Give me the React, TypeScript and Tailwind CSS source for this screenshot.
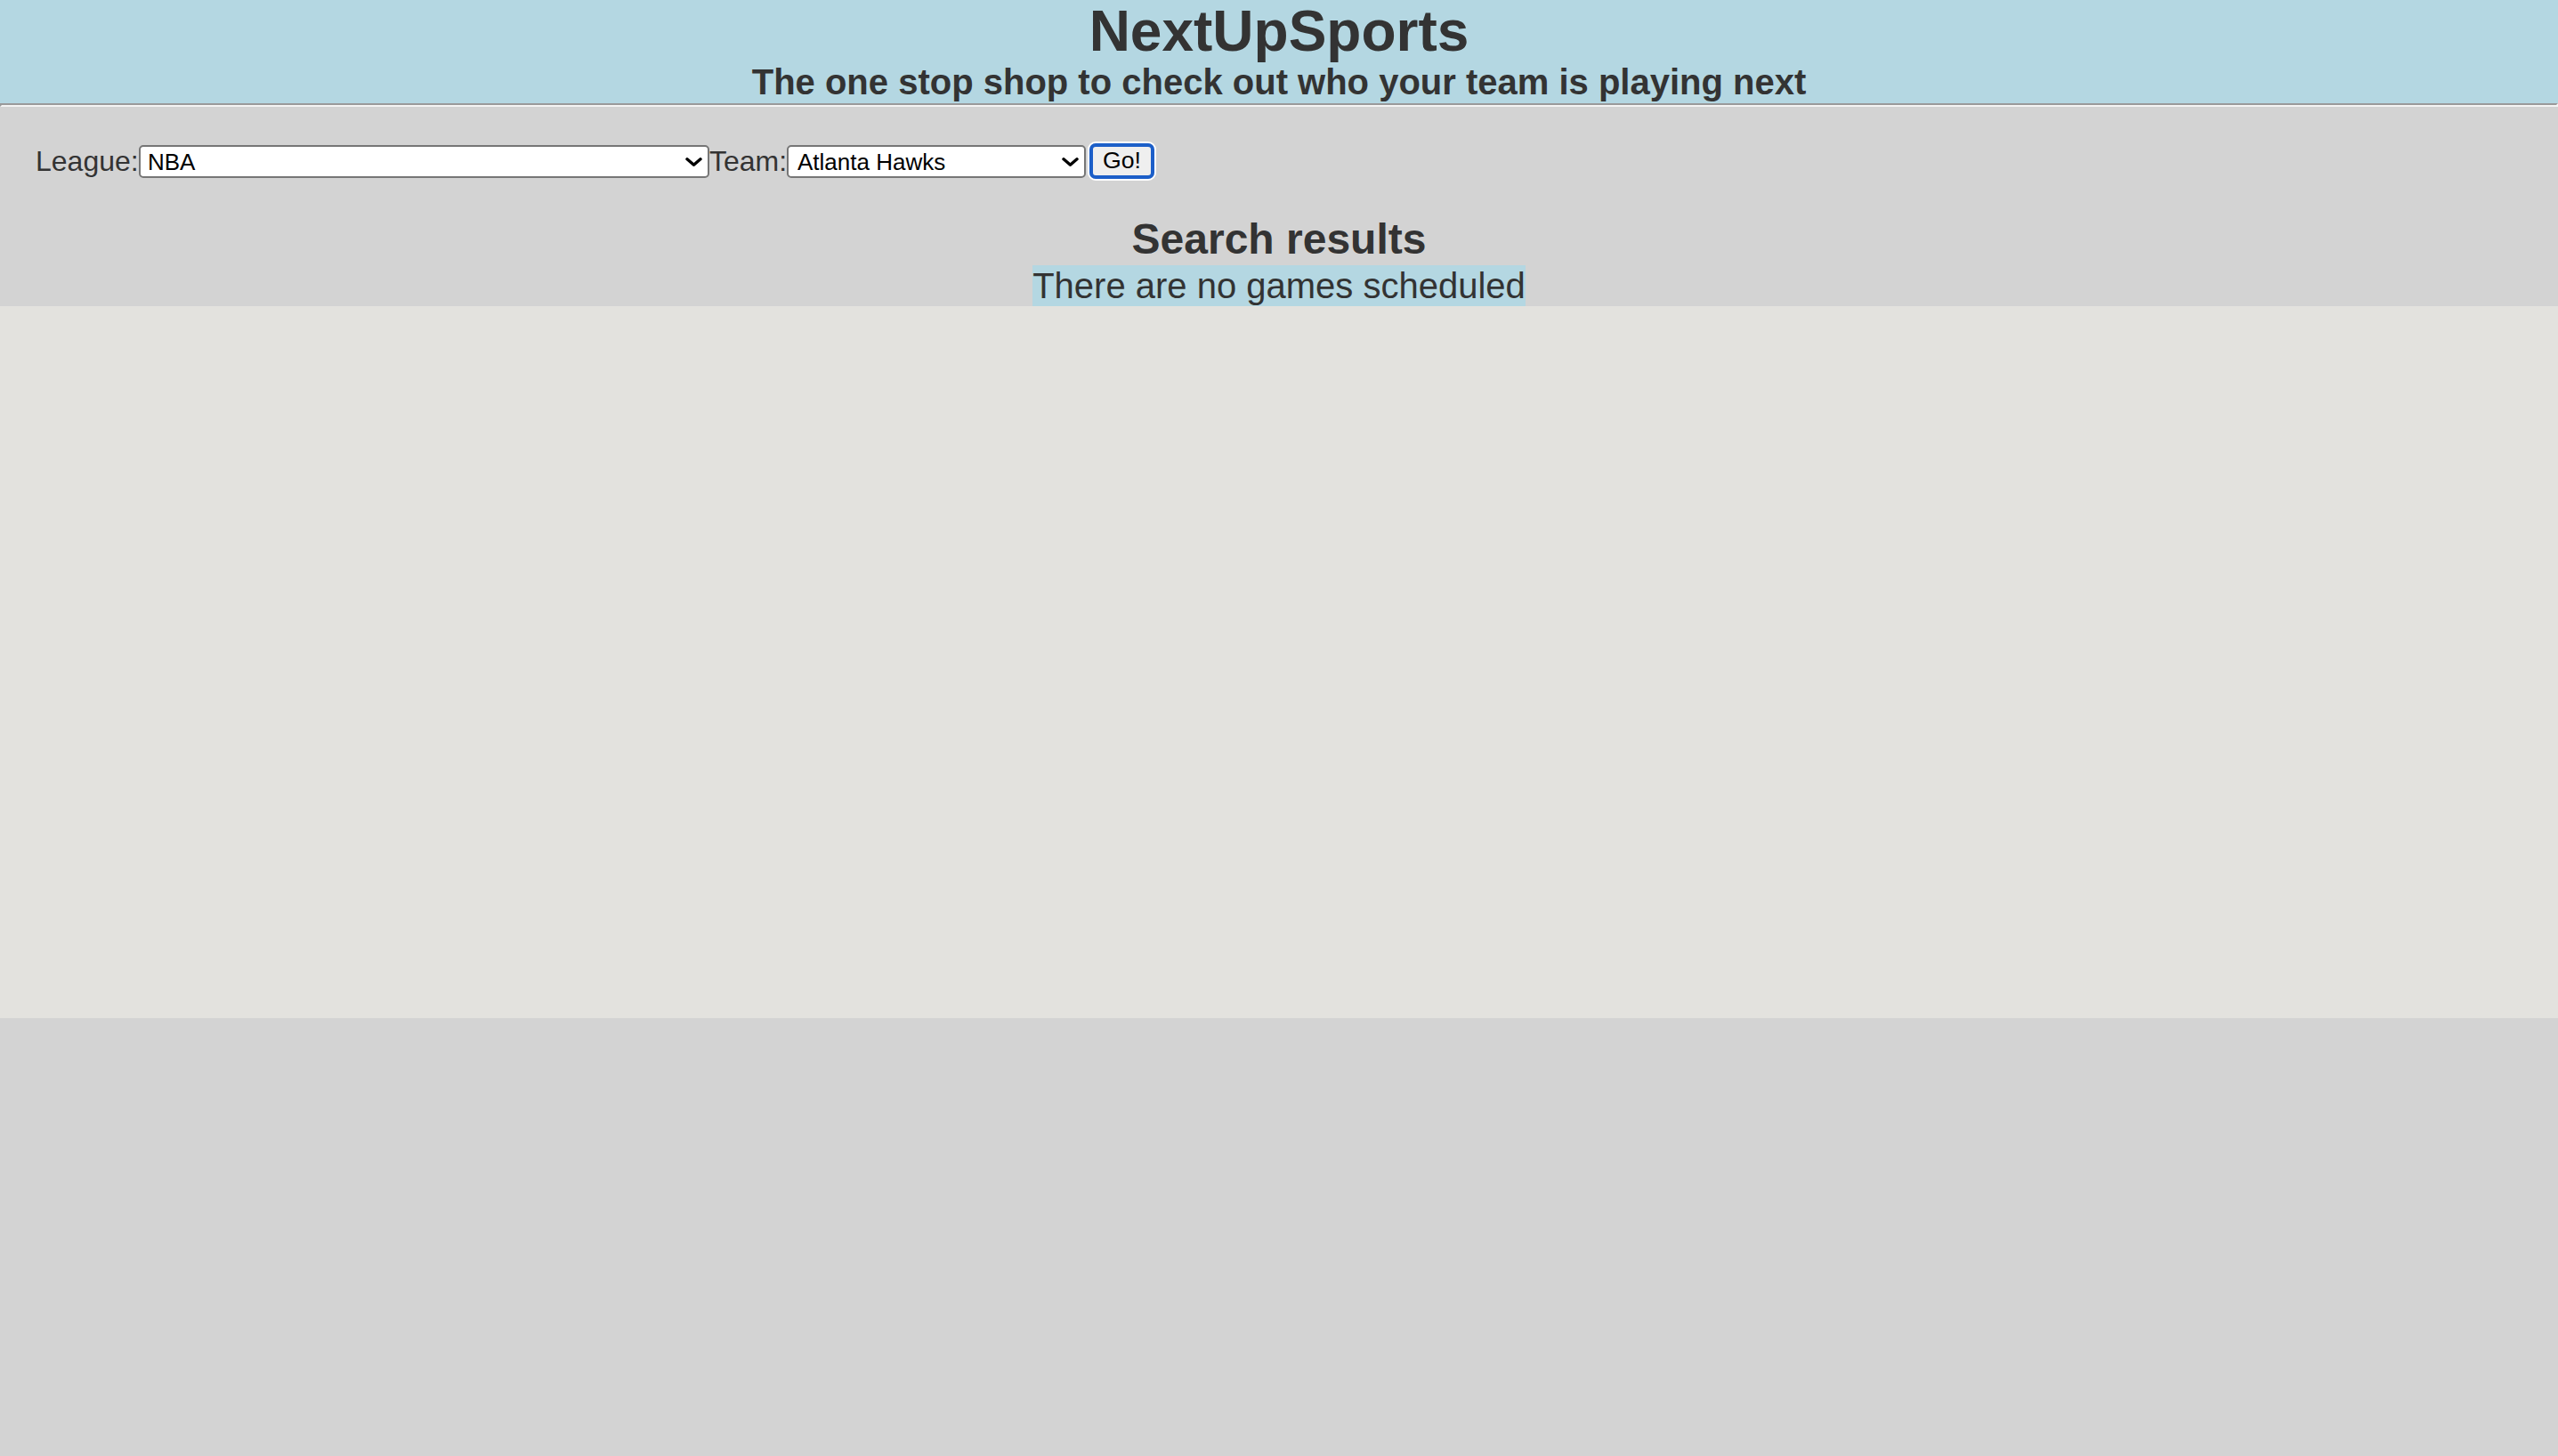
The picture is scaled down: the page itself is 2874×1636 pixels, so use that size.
import React from "react";

function Chevron() {
  return (
    <svg
      className="pointer-events-none absolute right-[8px] top-[14px]"
      width="19"
      height="10"
      viewBox="0 0 19 10"
      fill="none"
    >
      <path d="M2 1.8 L9.5 8.2 L17 1.8" stroke="#000" strokeWidth="3.4" strokeLinecap="round" strokeLinejoin="round" />
    </svg>
  );
}

export default function App() {
  return (
    <div className="min-h-screen bg-[#d3d3d3] font-['Liberation_Sans',Arial,sans-serif] text-[#333]">
      <header className="h-[116px] bg-[#b4d7e2] text-center">
        <h1 className="text-[64px] font-bold leading-[71px]">NextUpSports</h1>
        <h3 className="text-[40px] font-bold leading-[42px]">
          The one stop shop to check out who your team is playing next
        </h3>
      </header>
      <div className="h-[4px] border-2 border-t-[#9a9a9a] border-l-[#9a9a9a] border-b-[#f4f4f4] border-r-[#f4f4f4]" />
      <section className="pt-[39px]">
        <form className="flex h-[44px] items-center pl-[40px]" onSubmit={(e) => e.preventDefault()}>
          <span className="w-[116px] whitespace-nowrap text-[32px] leading-[37px]">League:</span>
          <div className="relative h-[37px] w-[641px]">
            <select
              defaultValue="NBA"
              className="h-[37px] w-full appearance-none rounded-[5px] border-2 border-[#767676] bg-white pb-0 pt-[3px] pl-[8px] text-[26px] leading-[27px] text-black outline-none"
            >
              <option>NBA</option>
              <option>NFL</option>
              <option>MLB</option>
              <option>NHL</option>
            </select>
            <Chevron />
          </div>
          <span className="w-[87px] whitespace-nowrap text-[32px] leading-[37px]">Team:</span>
          <div className="relative h-[37px] w-[336px]">
            <select
              defaultValue="Atlanta Hawks"
              className="h-[37px] w-full appearance-none rounded-[5px] border-2 border-[#767676] bg-white pb-0 pt-[3px] pl-[10px] text-[26px] leading-[27px] text-black outline-none"
            >
              <option>Atlanta Hawks</option>
              <option>Boston Celtics</option>
              <option>Brooklyn Nets</option>
            </select>
            <Chevron />
          </div>
          <button
            type="submit"
            className="ml-[2px] h-[44px] w-[77px] rounded-[9px] border-2 border-white p-0"
          >
            <span className="flex h-full w-full items-center justify-center rounded-[7px] border-4 border-[#1c5fc9] bg-[#efefef] pb-[2px] text-[26.67px] text-black">
              Go!
            </span>
          </button>
        </form>
        <h2 className="mt-[38px] text-center text-[48px] font-bold leading-[56px]">Search results</h2>
        <p className="mt-[1px] text-center text-[40px] leading-[46px]">
          <span className="inline-block bg-[#b4d7e2] leading-[46px]">There are no games scheduled</span>
        </p>
      </section>
      <div className="h-[800px] bg-[#e3e2de]" />
    </div>
  );
}
